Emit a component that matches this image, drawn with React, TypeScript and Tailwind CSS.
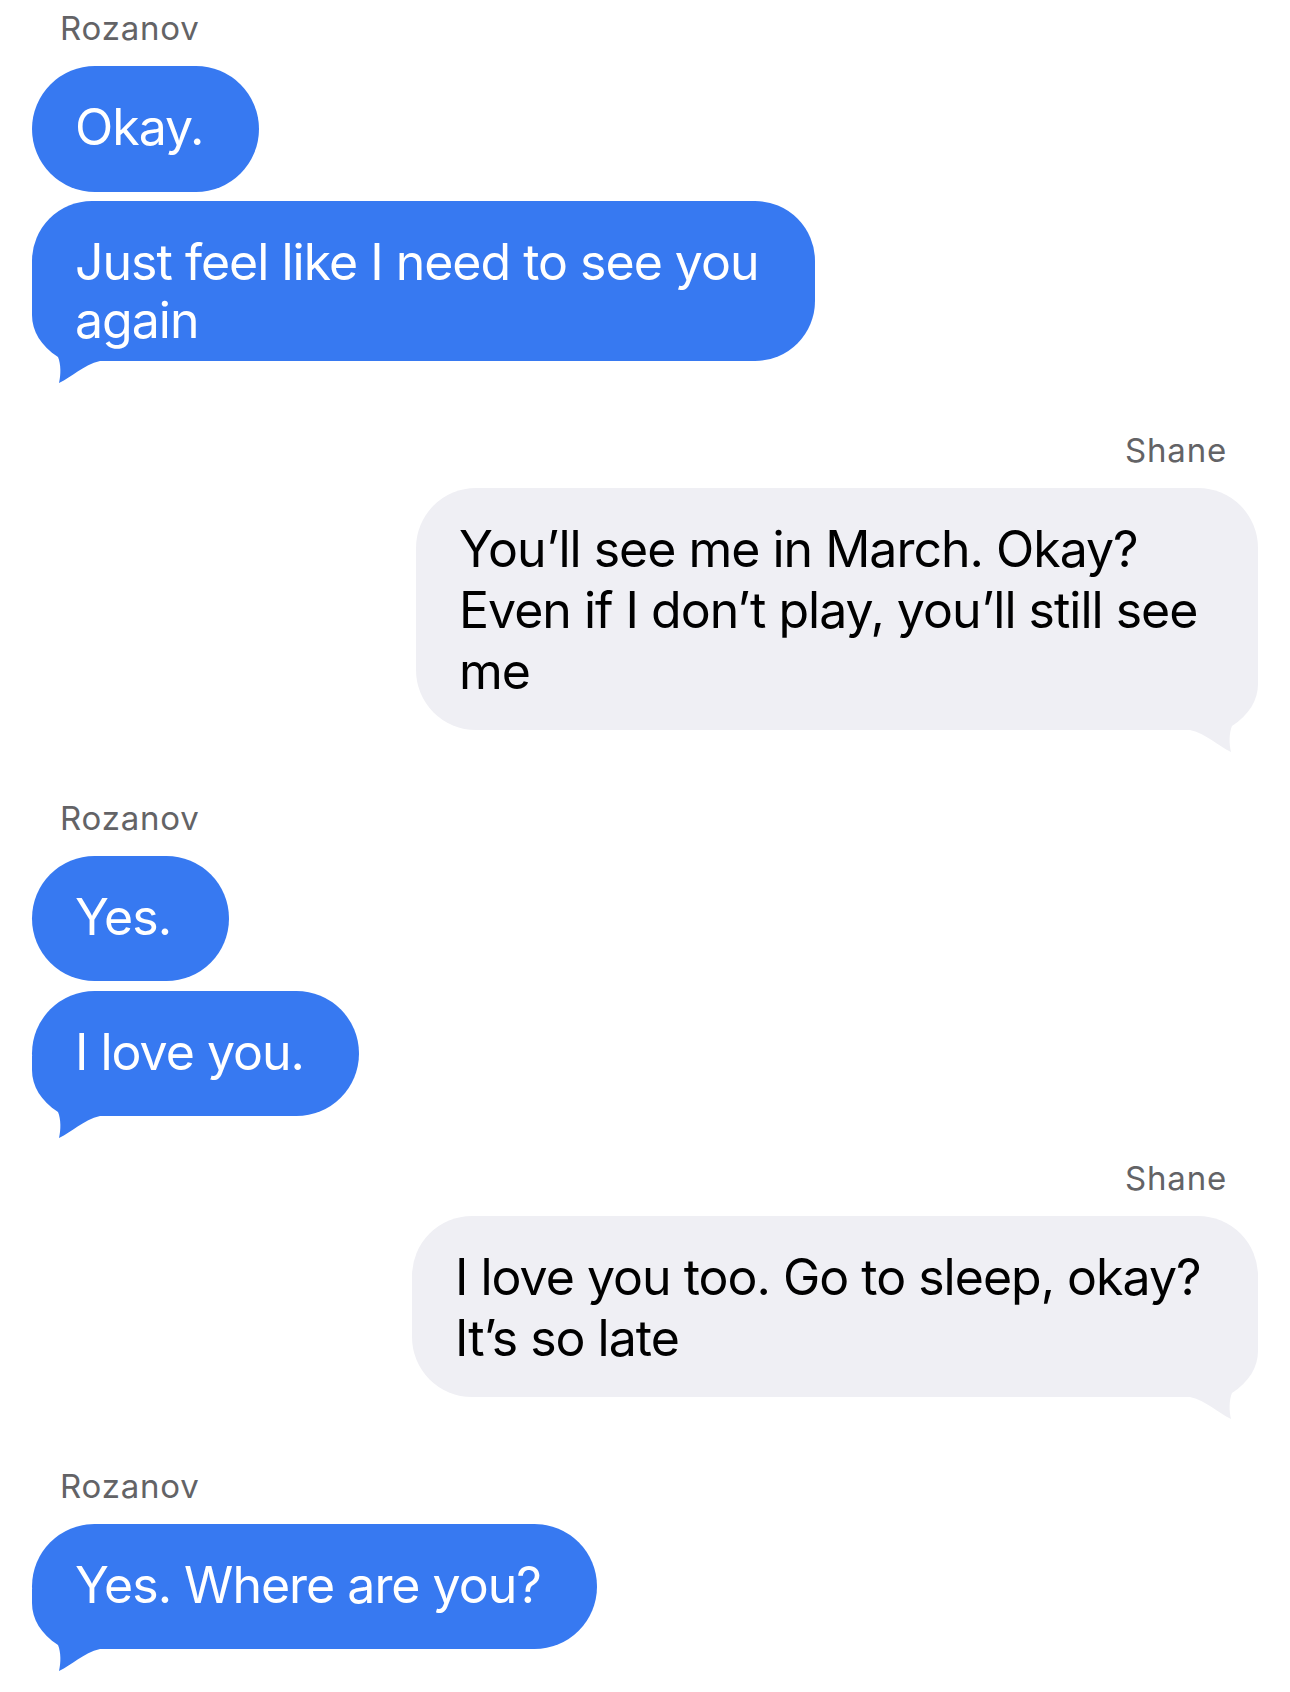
import React from "react";

type Side = "in" | "out";

const font = { fontFamily: "Inter, 'Noto Sans', sans-serif" };

function Tail({ side }: { side: Side }) {
  // corner piece + hook, drawn in the bubble's bottom corner
  return (
    <svg
      width="80"
      height="84"
      viewBox="0 0 80 84"
      className={`absolute bottom-[-24px] ${side === "in" ? "left-0" : "right-0 -scale-x-100"}`}
    >
      <path
        d="M0,0 L0,14 C0,30 9,45 26,56 C29,63 29,74 27,82 C40,76 51,64 68,60 L80,60 L80,0 Z"
        fill={side === "in" ? "#3779F1" : "#EFEFF4"}
      />
    </svg>
  );
}

function Bubble({
  side,
  tail = false,
  className,
  children,
}: {
  side: Side;
  tail?: boolean;
  className: string;
  children: React.ReactNode;
}) {
  const color =
    side === "in" ? "bg-[#3779F1] text-white" : "bg-[#EFEFF4] text-black";
  return (
    <div
      className={`relative whitespace-nowrap text-[50px] tracking-[-1px] pl-[43px] ${color} ${className}`}
      style={font}
    >
      {tail && <Tail side={side} />}
      <span className="relative">{children}</span>
    </div>
  );
}

function Label({ side, children }: { side: Side; children: React.ReactNode }) {
  return (
    <div
      className={`text-[33px] leading-[40px] tracking-[0.8px] text-[#636366] mb-[18px] ${side === "in" ? "self-start ml-[28px]" : "self-end mr-[31px]"}`}
      style={font}
    >
      {children}
    </div>
  );
}

export default function App() {
  return (
    <div className="w-[1290px] h-[1692px] bg-white overflow-hidden px-[32px] pt-[8px] flex flex-col">
      {/* Rozanov */}
      <div className="flex flex-col items-start">
        <Label side="in">Rozanov</Label>
        <div className="flex flex-col items-start gap-[9px]">
          <Bubble side="in" className="w-[227px] rounded-full pt-[31px] pb-[34px] leading-[61px]">
            Okay.
          </Bubble>
          <Bubble side="in" tail className="w-[783px] rounded-[60px] pt-[32px] pb-[12px] leading-[58px]">
            Just feel like I need to see you
            <br />
            again
          </Bubble>
        </div>
      </div>

      {/* Shane */}
      <div className="flex flex-col items-end mt-[69px]">
        <Label side="out">Shane</Label>
        <Bubble side="out" tail className="w-[842px] rounded-[60px] pt-[31px] pb-[28px] leading-[61px]">
          You’ll see me in March. Okay?
          <br />
          Even if I don’t play, you’ll still see
          <br />
          me
        </Bubble>
      </div>

      {/* Rozanov */}
      <div className="flex flex-col items-start mt-[68px]">
        <Label side="in">Rozanov</Label>
        <div className="flex flex-col items-start gap-[10px]">
          <Bubble side="in" className="w-[197px] rounded-full pt-[31px] pb-[33px] leading-[61px]">
            Yes.
          </Bubble>
          <Bubble side="in" tail className="w-[327px] rounded-full pt-[31px] pb-[33px] leading-[61px]">
            I love you.
          </Bubble>
        </div>
      </div>

      {/* Shane */}
      <div className="flex flex-col items-end mt-[42px]">
        <Label side="out">Shane</Label>
        <Bubble side="out" tail className="w-[846px] rounded-[60px] pt-[31px] pb-[28px] leading-[61px]">
          I love you too. Go to sleep, okay?
          <br />
          It’s so late
        </Bubble>
      </div>

      {/* Rozanov */}
      <div className="flex flex-col items-start mt-[69px]">
        <Label side="in">Rozanov</Label>
        <Bubble side="in" tail className="w-[565px] rounded-full pt-[31px] pb-[33px] leading-[61px]">
          Yes. Where are you?
        </Bubble>
      </div>
    </div>
  );
}
